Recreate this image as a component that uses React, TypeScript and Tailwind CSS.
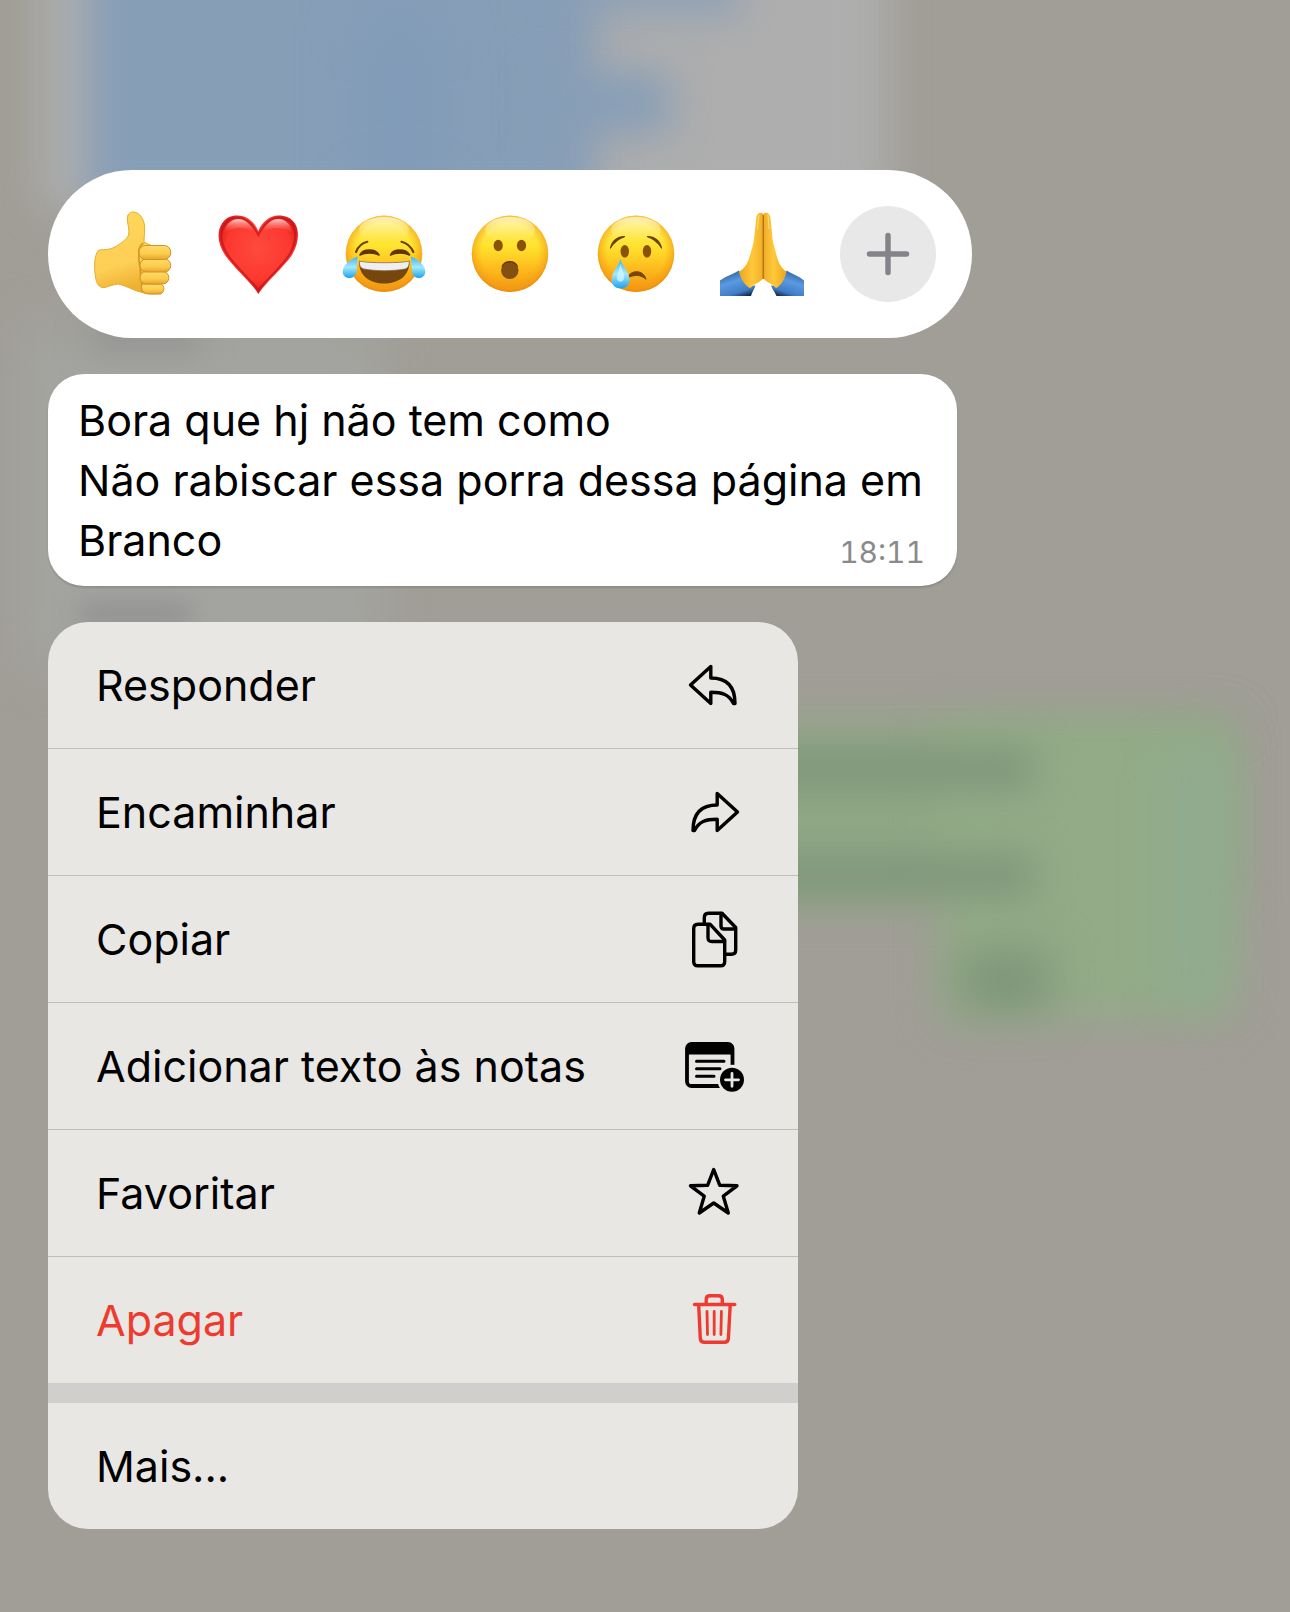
import type { ReactNode } from 'react';

function Glyph({ children }: { children: ReactNode }) {
  return (
    <svg viewBox="0 0 84 86" className="block h-[86px] w-[84px]" fill="none" aria-hidden="true">
      {children}
    </svg>
  );
}

function Face({ id, children }: { id: string; children: ReactNode }) {
  return (
    <Glyph>
      <defs>
        <linearGradient id={`${id}-base`} x1="0" y1="0" x2="0" y2="1">
          <stop offset="0" stopColor="#ffec6b" />
          <stop offset="0.4" stopColor="#ffe32e" />
          <stop offset="0.7" stopColor="#fdbb1c" />
          <stop offset="1" stopColor="#f29412" />
        </linearGradient>
        <radialGradient id={`${id}-rim`} cx="0.5" cy="0.48" r="0.52">
          <stop offset="0.72" stopColor="#f59b12" stopOpacity="0" />
          <stop offset="0.92" stopColor="#f39a14" stopOpacity="0.55" />
          <stop offset="1" stopColor="#e68a10" stopOpacity="0.9" />
        </radialGradient>
        <linearGradient id={`${id}-shine`} x1="0" y1="0" x2="0" y2="1">
          <stop offset="0" stopColor="#fffbe0" stopOpacity="0.75" />
          <stop offset="1" stopColor="#fff27a" stopOpacity="0" />
        </linearGradient>
        <linearGradient id={`${id}-tear`} x1="0" y1="0" x2="0" y2="1">
          <stop offset="0" stopColor="#3fb6ee" />
          <stop offset="0.5" stopColor="#a5e9fd" />
          <stop offset="1" stopColor="#1ea2e6" />
        </linearGradient>
      </defs>
      <circle cx="42" cy="42.7" r="38.2" fill={`url(#${id}-base)`} />
      <circle cx="42" cy="42.7" r="38.2" fill={`url(#${id}-rim)`} />
      <ellipse cx="42" cy="19" rx="25" ry="13" fill={`url(#${id}-shine)`} />
      {children}
    </Glyph>
  );
}

function ThumbsUp() {
  return (
    <Glyph>
      <defs>
        <linearGradient id="thumb-skin" x1="0" y1="0" x2="0.25" y2="1">
          <stop offset="0" stopColor="#ffd75c" />
          <stop offset="0.7" stopColor="#fdcf54" />
          <stop offset="1" stopColor="#eeb02f" />
        </linearGradient>
        <linearGradient id="thumb-finger" x1="0" y1="0" x2="0" y2="1">
          <stop offset="0" stopColor="#ffdc68" />
          <stop offset="0.6" stopColor="#fccb4b" />
          <stop offset="1" stopColor="#e5a62c" />
        </linearGradient>
      </defs>
      <path
        d="M37.3 6.5C37.8 2.500 41 0.700 44 1C49.500 1.800 53 7 54.300 13C55.500 19 53.800 26 54 31L64 36V76L72 82C66 83.500 58 83 53 81.800C43 79.500 36 74.500 28.300 73C23 73.500 19 75.500 14 76.700C9 76.500 6.500 73 5.500 66C4 56 4 45 8.300 39.500C13 37.800 18 39.500 24 36.500C30 33 36.500 29 38.600 24C40 19 37 12 37.300 6.500Z"
        fill="url(#thumb-skin)"
        stroke="#e8ab30"
        strokeWidth="1"
      />
      <path d="M53.500 32C50 34 48.500 38 49 43C48 50 50 54 50.500 58C50 64 51 68 52 72L52.500 81" stroke="#c98a1c" strokeWidth="1.800" opacity="0.75" />
      <path d="M52 73H70.500C75 74.500 75 81 70.500 83H60C54 83 50 80 52 73Z" fill="url(#thumb-finger)" stroke="#cf9224" strokeWidth="1" />
      <rect x="50" y="60.500" width="28.800" height="12.500" rx="6" fill="url(#thumb-finger)" stroke="#cf9224" strokeWidth="1" />
      <rect x="50" y="48" width="30.700" height="13" rx="6.300" fill="url(#thumb-finger)" stroke="#cf9224" strokeWidth="1" />
      <rect x="49" y="34.500" width="31.700" height="14" rx="6.500" fill="url(#thumb-finger)" stroke="#cf9224" strokeWidth="1" />
    </Glyph>
  );
}

function Heart() {
  const shape =
    'M42.300 83C36 72 17 56 9 44C1 32 1 20 6 12.500C10 6.500 15 4.500 21.300 4.500C31 4.500 38.500 11 42.300 20C46 11 53.500 4.500 62.500 4.500C69 4.500 75 6.500 79 12.500C83.500 20 83 32 76 44C68 56 49 72 42.300 83Z';
  return (
    <Glyph>
      <defs>
        <radialGradient id="heart-base" cx="0.5" cy="0.42" r="0.62">
          <stop offset="0" stopColor="#ff4a3e" />
          <stop offset="0.65" stopColor="#fc382f" />
          <stop offset="1" stopColor="#c80f14" />
        </radialGradient>
        <linearGradient id="heart-shine" x1="0" y1="0" x2="0" y2="1">
          <stop offset="0" stopColor="#ffd9d6" stopOpacity="0.95" />
          <stop offset="1" stopColor="#ff5a50" stopOpacity="0" />
        </linearGradient>
      </defs>
      <path d={shape} fill="url(#heart-base)" />
      <path
        d="M42.300 79C36 70 19 55.500 11.500 43.500C4 31 4 21 8.500 14C12 8.500 16.500 6.800 21.300 6.800C30 6.800 37 13.500 42.300 24C47.500 13.500 54 6.800 62.500 6.800C68 6.800 73 8.500 76.500 14C80.500 21 80.500 31 73.500 43.500C66 55.500 49 70 42.300 79Z"
        stroke="#c1121b"
        strokeWidth="2"
        opacity="0.7"
      />
      <path d="M8 22C10 11 18 7.500 23 8C31 9 36 15 38 21C30 16 18 15 8 22Z" fill="url(#heart-shine)" />
      <path d="M76.500 22C74.500 11 67 7.500 61.500 8C53.500 9 49 15 46.500 21C54 16 67 15 76.500 22Z" fill="url(#heart-shine)" />
    </Glyph>
  );
}

function Joy() {
  return (
    <Face id="joy">
      <path d="M17 50.500C17 65 28 72.500 42.200 72.500C56.500 72.500 67.500 65 67.500 50.500C60 52.500 25 52.500 17 50.500Z" fill="#75470c" />
      <path d="M17.300 50C25 52.300 60 52.300 67.300 50C67.500 54.500 66 57.300 63 58C50 60.300 35 60.300 22 58C18.500 57.300 17 54.500 17.300 50Z" fill="#efeff2" stroke="#8a6a45" strokeWidth="0.800" />
      <path d="M18 44C21 37.500 33.500 37.500 37 44C32 41.300 23 41.300 18 44ZM48.500 44C51.500 37.500 64 37.500 67.500 44C62.500 41.300 53.500 41.300 48.500 44Z" fill="#5f3506" stroke="#5f3506" strokeWidth="1.600" strokeLinejoin="round" />
      <path d="M14 41C16 36 20 32 25.300 30.800M59.500 30.800C64.500 32 69 36 71.300 41" stroke="#6d3f06" strokeWidth="2.200" strokeLinecap="round" />
      <path d="M15.500 45.500C9 48 0.700 54 0.700 60.500C0.700 65 4 67.300 7.800 67C13 66.500 15 62 14.800 57Z" fill="url(#joy-tear)" />
      <path d="M69 45.500C75.500 48 83.300 54 83.300 60.500C83.300 65 80 67.300 76.500 67C71.300 66.500 69.500 62 69.700 57Z" fill="url(#joy-tear)" />
    </Face>
  );
}

function Surprised() {
  return (
    <Face id="surprised">
      <ellipse cx="30.200" cy="34.500" rx="4.600" ry="5.800" fill="#8a5208" />
      <ellipse cx="53.500" cy="34.500" rx="4.600" ry="5.800" fill="#8a5208" />
      <circle cx="41.800" cy="59.300" r="8.700" fill="#84500f" />
      <path d="M34 55.500A8.700 8.700 0 0 1 49.600 55.500" stroke="#5e3505" strokeWidth="1.200" />
    </Face>
  );
}

function Crying() {
  return (
    <Face id="crying">
      <ellipse cx="30.800" cy="40.300" rx="4.200" ry="6.300" fill="#8a5208" />
      <ellipse cx="53" cy="40.300" rx="4.200" ry="6.300" fill="#8a5208" />
      <path d="M16.500 37C18 30 24 25 30.500 25.700C25 27.500 20 31 16.500 37ZM67.500 37C66 30 60 25 53.500 25.700C59 27.500 64 31 67.500 37Z" fill="#6d3f06" stroke="#6d3f06" strokeWidth="1.200" strokeLinejoin="round" />
      <path d="M34 66.500C36 59 49.500 58 52 68.300C47 63.500 41 63.500 34 66.500Z" fill="#7a4508" stroke="#7a4508" strokeWidth="1" />
      <path d="M26.300 48.300C28.500 55 35.600 61.500 35.600 69C35.600 74 31.500 77.500 26.600 77.500C21.700 77.500 17.600 74 17.600 69C17.600 61.500 24.500 55 26.300 48.300Z" fill="url(#crying-tear)" />
      <path d="M26.500 53C28 59 31 63 30 68C28.500 71.500 24.500 71.500 23 68C22.500 63 25.500 59 26.500 53Z" fill="#d9f8ff" opacity="0.7" />
    </Face>
  );
}

function FoldedHands() {
  return (
    <Glyph>
      <defs>
        <linearGradient id="hands-left" x1="0" y1="0" x2="1" y2="0">
          <stop offset="0" stopColor="#eea41d" />
          <stop offset="0.55" stopColor="#ffc93a" />
          <stop offset="1" stopColor="#f0ae28" />
        </linearGradient>
        <linearGradient id="hands-right" x1="0" y1="0" x2="1" y2="0">
          <stop offset="0" stopColor="#f0ae28" />
          <stop offset="0.45" stopColor="#ffc93a" />
          <stop offset="1" stopColor="#eea41d" />
        </linearGradient>
        <linearGradient id="hands-sleeve-left" x1="0.3" y1="0" x2="0.75" y2="1">
          <stop offset="0" stopColor="#2d5f9f" />
          <stop offset="0.4" stopColor="#5a9ae0" />
          <stop offset="0.8" stopColor="#3f7cc4" />
          <stop offset="1" stopColor="#142c4f" />
        </linearGradient>
        <linearGradient id="hands-sleeve-right" x1="0.7" y1="0" x2="0.25" y2="1">
          <stop offset="0" stopColor="#2d5f9f" />
          <stop offset="0.4" stopColor="#5a9ae0" />
          <stop offset="0.8" stopColor="#3f7cc4" />
          <stop offset="1" stopColor="#142c4f" />
        </linearGradient>
      </defs>
      <path d="M0 69.500C6 65 13 63 19 59.500L23 69L31 75L35.500 74.500C34.500 78 32 81 31 85H0Z" fill="url(#hands-sleeve-left)" />
      <path d="M84 69.500C79 65 72.500 63 66.500 59.500L63 69L55.500 75L51 74.500C52 78 55 81 56.500 85H84Z" fill="url(#hands-sleeve-right)" />
      <path d="M36.500 5.500C37 2.500 41 0.500 43.300 3V67.500C41 70.500 35 72.500 30.400 77C25.500 75.500 20.500 68 19 60.500C24 58 27.500 53 29.500 46C31.500 39 33.500 33 34 28Z" fill="url(#hands-left)" />
      <path d="M50.300 5.500C49.500 2.500 46 0.500 43.300 3V67.500C45.500 70.500 51.500 72.500 56 77C60.500 75.500 65 68 66.500 60.500C62 58 59 53 57 46C55 39 53.500 33 52.500 28Z" fill="url(#hands-right)" />
      <path d="M43.300 4V68" stroke="#b8740f" strokeWidth="1.500" />
      <path d="M39 3.500L37.500 18M48 3.500L49 18" stroke="#ffe38a" strokeWidth="1.200" opacity="0.7" />
    </Glyph>
  );
}

function MenuIcon({ children }: { children: ReactNode }) {
  return (
    <svg
      viewBox="0 0 60 60"
      className="block h-[60px] w-[60px] shrink-0"
      fill="none"
      stroke="currentColor"
      strokeWidth="3.400"
      strokeLinecap="round"
      strokeLinejoin="round"
      aria-hidden="true"
    >
      {children}
    </svg>
  );
}

const replyPath =
  'M6.500 30L26.800 11.500V23C41 23 51 30 51 48.500H49.500C45 39.500 38.500 37.300 26.800 37.300V48.500Z';

const replyIcon = (
  <MenuIcon>
    <path d={replyPath} />
  </MenuIcon>
);

const forwardIcon = (
  <MenuIcon>
    <path d={replyPath} transform="matrix(-1 0 0 1 60 0)" />
  </MenuIcon>
);

const copyIcon = (
  <MenuIcon>
    <path d="M26 15.200H14C11 15.200 9.700 16.800 9.700 19.500V52.500C9.700 55.300 11 56.800 14 56.800H36.500C39.500 56.800 40.700 55.300 40.700 52.500V31Z" />
    <path d="M24 15.500V28.500C24 31.500 25 32.500 28 32.500H40.500" />
    <path d="M20.300 14V8.500C20.300 5.700 22 4.200 24.500 4.200H38L51.700 18.500V41C51.700 43.700 50.200 45.200 47.500 45.200H42" />
    <path d="M37 4.500V17C37 19.300 38 20 40 20H51.500" />
  </MenuIcon>
);

const noteIcon = (
  <MenuIcon>
    <mask id="note-cutout" maskUnits="userSpaceOnUse" x="0" y="0" width="60" height="60">
      <rect width="60" height="60" fill="#fff" stroke="none" />
      <circle cx="48.500" cy="43.800" r="15" fill="#000" stroke="none" />
    </mask>
    <g mask="url(#note-cutout)">
      <rect x="3" y="8" width="45.500" height="42" rx="4.500" strokeWidth="3.800" />
      <path d="M3 19V11L6 8H46L48.500 11V19C48 18 47 17.800 46 17.800H6C4.500 17.800 3.500 18 3 19Z" fill="currentColor" strokeWidth="1.500" />
      <path d="M12.500 25.300H40M12.500 32.800H36M12.500 40.300H30" strokeWidth="3" />
    </g>
    <circle cx="48" cy="43.800" r="12" fill="currentColor" stroke="none" />
    <path d="M41.500 43.800H54.500M48 37.300V50.300" stroke="#e8e7e4" strokeWidth="2.800" />
  </MenuIcon>
);

const starIcon = (
  <MenuIcon>
    <path d="M29.700 6.500L35.800 22.300L53 22.800L39.300 33.200L44.300 50L29.700 40L15.300 50L20.200 33.200L6.500 22.800L23.600 22.300Z" />
  </MenuIcon>
);

const trashIcon = (
  <MenuIcon>
    <path d="M10.500 14.500H50.800M22.200 14V9.500C22.200 7 23.500 5.800 26 5.800H34.500C37 5.800 38.300 7 38.300 9.500V14M14.700 15L16.300 48.500C16.500 51 18 52.300 20.500 52.300H40.300C42.800 52.300 44.200 51 44.400 48.500L46.200 15" />
    <path d="M23 21.500L23.500 44.500M30.200 21.500V44.500M37.400 21.500L36.900 44.500" strokeWidth="2.800" />
  </MenuIcon>
);

const reactions = [
  { label: 'Curtir', glyph: <ThumbsUp /> },
  { label: 'Amar', glyph: <Heart /> },
  { label: 'Rir', glyph: <Joy /> },
  { label: 'Surpreso', glyph: <Surprised /> },
  { label: 'Triste', glyph: <Crying /> },
  { label: 'Agradecer', glyph: <FoldedHands /> },
];

const actions = [
  { label: 'Responder', icon: replyIcon, color: 'text-black' },
  { label: 'Encaminhar', icon: forwardIcon, color: 'text-black' },
  { label: 'Copiar', icon: copyIcon, color: 'text-black' },
  { label: 'Adicionar texto às notas', icon: noteIcon, color: 'text-black' },
  { label: 'Favoritar', icon: starIcon, color: 'text-black' },
  { label: 'Apagar', icon: trashIcon, color: 'text-[#ee3b30]' },
];

// Blurred chat bubbles that show through behind the open menu.
function Backdrop() {
  return (
    <div className="pointer-events-none absolute inset-0 -z-10" aria-hidden="true">
      <div className="absolute -top-20 left-10 h-[290px] w-[848px] bg-[#aeaeae] blur-[20px]" />
      <div className="absolute -top-20 left-[86px] h-[290px] w-[510px] bg-[#879eb7] blur-[20px]" />
      <div className="absolute -top-20 left-[560px] h-[96px] w-[180px] bg-[#879eb7] opacity-80 blur-[20px]" />
      <div className="absolute top-[72px] left-[540px] h-[62px] w-[130px] bg-[#879eb7] blur-[20px]" />
      <div className="absolute top-[20px] left-[370px] h-[180px] w-[60px] bg-[#7e9ab9] blur-[32px]" />
      <div className="absolute top-[325px] left-5 h-[340px] w-[360px] bg-[#a3a4a0] blur-[24px]" />
      <div className="absolute top-[326px] left-[90px] h-[22px] w-[110px] bg-[#8f908f] blur-[16px]" />
      <div className="absolute top-[604px] left-[80px] h-[22px] w-[110px] bg-[#8f908f] blur-[12px]" />
      <div className="absolute top-[724px] right-[60px] h-[176px] w-[600px] bg-[#91a886] blur-[22px]" />
      <div className="absolute top-[724px] right-[60px] h-[294px] w-[290px] bg-[#93ab87] blur-[22px]" />
      <div className="absolute top-[750px] right-[64px] h-[250px] w-[60px] bg-[#90ab8f] blur-[20px]" />
      <div className="absolute top-[748px] right-[256px] h-[42px] w-[400px] bg-[#80967a] blur-[18px]" />
      <div className="absolute top-[854px] right-[256px] h-[42px] w-[400px] bg-[#80967a] blur-[18px]" />
      <div className="absolute top-[950px] right-[240px] h-[60px] w-[90px] bg-[#7e9578] blur-[22px]" />
    </div>
  );
}

export default function App() {
  return (
    <main className="relative isolate flex min-h-screen flex-col items-start gap-9 overflow-hidden bg-[#a19e97] px-12 pt-[170px] pb-20 font-['Inter',sans-serif] text-[43px] leading-[60px] text-black">
      <Backdrop />

      <div className="flex items-center gap-9 rounded-full bg-white py-9 pr-9 pl-[42px]">
        <div className="flex items-center gap-[42px]">
          {reactions.map(({ label, glyph }) => (
            <button key={label} type="button" aria-label={label}>
              {glyph}
            </button>
          ))}
        </div>
        <button
          type="button"
          aria-label="Mais reações"
          className="flex h-24 w-24 items-center justify-center rounded-full bg-[#e8e8e8] text-[#848488]"
        >
          <svg viewBox="0 0 44 44" className="h-11 w-11" stroke="currentColor" strokeWidth="5.500" strokeLinecap="round" aria-hidden="true">
            <path d="M3.500 22H40.500M22 3.500V40.500" />
          </svg>
        </button>
      </div>

      <article className="grid w-[909px] max-w-full rounded-[36px] bg-white py-4 pr-8 pl-[30px] shadow-[0_2px_2px_rgba(0,0,0,0.12)]">
        <p className="col-start-1 row-start-1">
          Bora que hj não tem como
          <br />
          Não rabiscar essa porra dessa página em
          <br />
          Branco
        </p>
        <time className="col-start-1 row-start-1 self-end justify-self-end text-[30px] leading-[36px] text-[#8a8a8a] tabular-nums">
          18:11
        </time>
      </article>

      <div className="w-[750px] max-w-full overflow-hidden rounded-[40px] bg-[#e8e7e4]">
        <div className="divide-y divide-[#bfbebb]">
          {actions.map(({ label, icon, color }) => (
            <div key={label}>
              <button
                type="button"
                className={`flex h-[126px] w-full items-center justify-between pr-[54px] pl-12 text-left ${color}`}
              >
                {label}
                {icon}
              </button>
            </div>
          ))}
        </div>
        <div className="h-5 bg-[#d0cfcd]" />
        <button type="button" className="flex h-[126px] w-full items-center pl-12 text-left">
          Mais...
        </button>
      </div>
    </main>
  );
}
